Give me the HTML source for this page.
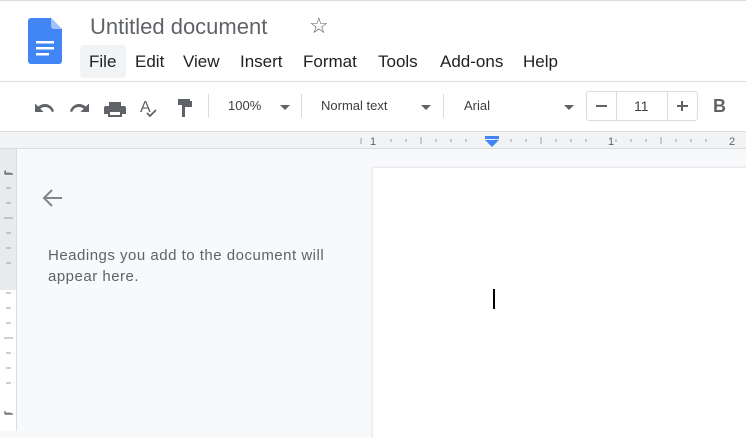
<!DOCTYPE html>
<html><head><style>
*{margin:0;padding:0;box-sizing:border-box}
body{width:746px;height:431px;overflow:hidden;background:#f8f9fa;font-family:"Liberation Sans",Arial,sans-serif;position:relative}
.abs{position:absolute}
.hdr{left:0;top:0;width:746px;height:82px;background:#fff;border-top:1px solid #dadce0;border-bottom:1px solid #dadce0}
.menu span{position:absolute;top:52px;font-size:17px;color:#202124}
.tb{left:0;top:82px;width:746px;height:50px;background:#fff;border-bottom:1px solid #dadce0}
.tb .t{position:absolute;font-size:14px;color:#3c4043;top:16px}
.sep{position:absolute;top:12px;width:1px;height:24px;background:#dadce0}
.caret{position:absolute;top:23px;width:0;height:0;border-left:5px solid transparent;border-right:5px solid transparent;border-top:5px solid #5f6368}
</style></head><body>
<div class="abs hdr"></div>
<svg class="abs" style="left:28px;top:18px" width="35" height="46" viewBox="0 0 35 46"><path d="M3 0H23L34 11V43a3 3 0 0 1-3 3H3a3 3 0 0 1-3-3V3a3 3 0 0 1 3-3z" fill="#4285f4"/><path d="M23 0L34 11H26a3 3 0 0 1-3-3z" fill="#a1c2fa"/><rect x="8" y="23" width="18" height="2.5" fill="#fff"/><rect x="8" y="29" width="18" height="2.5" fill="#fff"/><rect x="8" y="35" width="13" height="2.5" fill="#fff"/></svg>
<div class="abs" style="left:90px;top:14px;font-size:22px;color:#5f6368">Untitled document</div>
<div class="abs" style="left:309px;top:13px;font-size:22px;color:#5f6368">☆</div>
<div class="abs" style="left:80px;top:45px;width:46px;height:33px;background:#f1f3f4;border-radius:4px"></div>
<div class="menu"><span style="left:89px">File</span><span style="left:135px">Edit</span><span style="left:183px">View</span><span style="left:240px">Insert</span><span style="left:303px">Format</span><span style="left:378px">Tools</span><span style="left:440px">Add-ons</span><span style="left:523px">Help</span></div>
<div class="abs tb">
<svg class="abs" style="left:34px;top:14px" width="160" height="22" viewBox="0 0 160 22" fill="#5f6368">
<path d="M11 6c-2.6 0-5 1-6.8 2.6L1 5.5V14h8.5L6.3 10.8C7.6 9.6 9.3 9 11 9c3.2 0 5.9 2 6.8 5l2.3-.8C18.8 9.1 15.2 6 11 6z" transform="translate(0,2)"/>
<path d="M11 6c2.6 0 5 1 6.8 2.6L21 5.5V14h-8.5l3.2-3.2C14.4 9.6 12.7 9 11 9c-3.2 0-5.9 2-6.8 5L1.9 13.2C3.2 9.1 6.8 6 11 6z" transform="translate(34,2)"/>
<path d="M75 6h12v4H75zM72 10h18a2 2 0 0 1 2 2v6h-4v3H74v-3h-4v-6a2 2 0 0 1 2-2zm4 6v3h10v-3z"/>
<text x="106" y="16" font-size="16" font-family="Liberation Sans" fill="#5f6368">A</text><path d="M113 17l3 3 6-6" stroke="#5f6368" stroke-width="1.8" fill="none"/>
<path d="M144 3h12v6h-12zM156 5h2v6h-7v10h-3V9h8z"/>
</svg>
<div class="sep" style="left:208px"></div>
<div class="t" style="left:228px;font-size:13px">100%</div><div class="caret" style="left:280px"></div>
<div class="sep" style="left:301px"></div>
<div class="t" style="left:321px;font-size:13px">Normal text</div><div class="caret" style="left:421px"></div>
<div class="sep" style="left:443px"></div>
<div class="t" style="left:464px;font-size:13px">Arial</div><div class="caret" style="left:564px"></div>
<div class="abs" style="left:586px;top:9px;width:112px;height:30px;border:1px solid #dadce0;border-radius:3px"></div>
<div class="abs" style="left:616px;top:9px;width:1px;height:30px;background:#dadce0"></div>
<div class="abs" style="left:667px;top:9px;width:1px;height:30px;background:#dadce0"></div>
<div class="abs" style="left:596px;top:23px;width:11px;height:2px;background:#5f6368"></div>
<div class="t" style="left:634px">11</div>
<div class="abs" style="left:677px;top:23px;width:11px;height:2px;background:#5f6368"></div>
<div class="abs" style="left:681px;top:19px;width:2px;height:10px;background:#5f6368"></div>
<div class="t" style="left:713px;top:14px;font-size:18px;font-weight:bold;color:#5f6368">B</div>
</div>
<div class="abs" style="left:0;top:132px;width:746px;height:17px;background:#f1f3f4;border-bottom:1px solid #dadce0"></div>
<svg class="abs" style="left:360px;top:132px" width="386" height="17" viewBox="0 0 386 17">
<g stroke="#9aa0a6" stroke-width="1">
<line x1="1" y1="6" x2="1" y2="12"/><line x1="31" y1="7" x2="31" y2="10"/><line x1="46" y1="7" x2="46" y2="10"/><line x1="61" y1="5" x2="61" y2="12"/><line x1="76" y1="7" x2="76" y2="10"/><line x1="91" y1="7" x2="91" y2="10"/><line x1="106" y1="7" x2="106" y2="10"/>
<line x1="136" y1="7" x2="136" y2="10"/><line x1="151" y1="7" x2="151" y2="10"/><line x1="166" y1="7" x2="166" y2="10"/><line x1="181" y1="5" x2="181" y2="12"/><line x1="196" y1="7" x2="196" y2="10"/><line x1="211" y1="7" x2="211" y2="10"/><line x1="226" y1="7" x2="226" y2="10"/>
<line x1="256" y1="7" x2="256" y2="10"/><line x1="271" y1="7" x2="271" y2="10"/><line x1="286" y1="7" x2="286" y2="10"/><line x1="301" y1="5" x2="301" y2="12"/><line x1="316" y1="7" x2="316" y2="10"/><line x1="331" y1="7" x2="331" y2="10"/><line x1="346" y1="7" x2="346" y2="10"/>
</g>
<text x="10" y="13" font-size="11" fill="#5f6368" font-family="Liberation Sans">1</text>
<text x="248" y="13" font-size="11" fill="#5f6368" font-family="Liberation Sans">1</text>
<text x="369" y="13" font-size="11" fill="#5f6368" font-family="Liberation Sans">2</text>
<rect x="125" y="4" width="14" height="3" fill="#4285f4"/><path d="M125 8h14l-7 7z" fill="#4285f4"/>
</svg>
<div class="abs" style="left:0;top:149px;width:17px;height:282px;background:#fff;border-right:1px solid #dadce0"></div>
<div class="abs" style="left:0;top:149px;width:16px;height:141px;background:#e8eaed"></div>
<svg class="abs" style="left:0;top:149px" width="17" height="282" viewBox="0 0 17 282"><g stroke="#9aa0a6">
<line x1="6" y1="24" x2="11" y2="24"/><line x1="6" y1="39" x2="11" y2="39"/><line x1="6" y1="54" x2="11" y2="54"/><line x1="4" y1="69" x2="13" y2="69"/><line x1="6" y1="84" x2="11" y2="84"/><line x1="6" y1="99" x2="11" y2="99"/><line x1="6" y1="114" x2="11" y2="114"/><line x1="6" y1="144" x2="11" y2="144"/><line x1="6" y1="159" x2="11" y2="159"/><line x1="6" y1="174" x2="11" y2="174"/><line x1="4" y1="189" x2="13" y2="189"/><line x1="6" y1="204" x2="11" y2="204"/><line x1="6" y1="219" x2="11" y2="219"/><line x1="6" y1="234" x2="11" y2="234"/><line x1="6" y1="264" x2="11" y2="264"/></g>
<path d="M5 22v3h8M5 22h1" stroke="#3c4043" fill="none"/><path d="M5 262v3h8" stroke="#3c4043" fill="none"/></svg>
<svg class="abs" style="left:42px;top:188px" width="22" height="20" viewBox="0 0 22 20"><path d="M20 10H3M10 2L2 10l8 8" stroke="#80868b" stroke-width="2" fill="none"/></svg>
<div class="abs" style="left:48px;top:245px;font-size:15px;letter-spacing:0.5px;line-height:21px;color:#5f6368;width:300px">Headings you add to the document will appear here.</div>
<div class="abs" style="left:373px;top:168px;width:380px;height:270px;background:#fff;box-shadow:0 0 2px rgba(60,64,67,.25)"></div>
<div class="abs" style="left:493px;top:289px;width:2px;height:20px;background:#000"></div>
</body></html>
